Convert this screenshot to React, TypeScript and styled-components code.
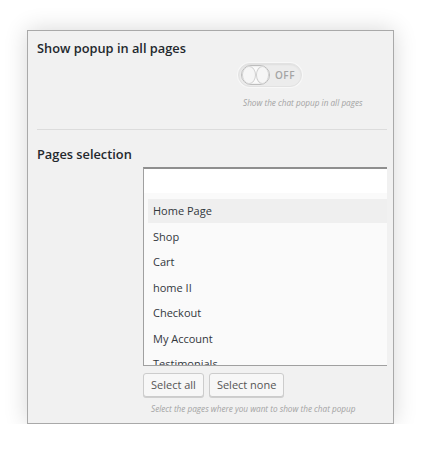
import React from "react";
import styled, { createGlobalStyle } from "styled-components";

const Global = createGlobalStyle`
  html, body { margin: 0; padding: 0; background: #ffffff; }
  body { font-family: "Open Sans", "Noto Sans", sans-serif; color: #23282d; }
  * { box-sizing: border-box; }
`;

const Page = styled.div`
  padding: 30px 0 0 27px;
`;

const Card = styled.div`
  width: 367px;
  height: 394px;
  background: #f1f1f1;
  border: 1px solid #a9a9a9;
  box-shadow: 0 0 22px rgba(0, 0, 0, 0.16);
  padding: 8px 6px 0 9px;
  overflow: hidden;
`;

const SectionTitle = styled.h3`
  margin: 0;
  font-size: 12.8px;
  line-height: 18px;
  font-weight: 600;
  color: #23282d;
`;

const ToggleField = styled.div`
  display: flex;
  flex-direction: column;
  align-items: flex-start;
  padding-left: 201px;
  margin-top: 6px;
`;

const Track = styled.div`
  width: 64px;
  height: 24px;
  border-radius: 12px;
  background: #ececec;
  border: 1px solid #e2e2e2;
  box-shadow: 0 0 0 1px #f8f8f8, inset 0 1px 2px rgba(0, 0, 0, 0.06);
  display: flex;
  align-items: center;
  padding-left: 2px;
  gap: 5px;
`;

const Knob = styled.div`
  width: 29px;
  height: 20px;
  border-radius: 10px;
  background: #fbfbfb;
  border: 1px solid #bdbdbd;
  box-shadow: inset 0 0 2px rgba(0, 0, 0, 0.15);
  display: flex;
  overflow: hidden;
`;

const KnobHalf = styled.span`
  flex: 1;
  height: 100%;
  border-radius: 50%;
  border: 1px solid #d0d0d0;
  background: #f6f6f6;
`;

const ToggleLabel = styled.span`
  font-size: 10px;
  font-weight: 600;
  letter-spacing: 0.5px;
  color: #a4a4a4;
`;

const Help = styled.p<{ $indent: number; $top: number }>`
  margin: ${(p) => p.$top}px 0 0 ${(p) => p.$indent}px;
  font-size: 8.2px;
  line-height: 12px;
  font-style: italic;
  color: #a3a3a3;
  white-space: nowrap;
`;

const Divider = styled.hr`
  margin: 20px 0 15px 0;
  border: 0;
  border-top: 1px solid #dcdcdc;
  height: 0;
`;

const SelectField = styled.div`
  display: flex;
  flex-direction: column;
  align-items: flex-start;
  padding-left: 106px;
  margin-top: 4px;
  overflow: hidden;
`;

const ListBox = styled.div`
  width: 270px;
  min-width: 270px;
  height: 199px;
  border: 1px solid #a0a0a0;
  border-top: 2px solid #8f8f8f;
  background: #fafafa;
  overflow: hidden;
`;

const Search = styled.div`
  height: 24px;
  background: #ffffff;
`;

const Options = styled.ul`
  list-style: none;
  margin: 0;
  padding: 6px 0 0 4px;
`;

const Option = styled.li<{ $active?: boolean }>`
  height: 24px;
  margin-bottom: 1.5px;
  padding-left: 5px;
  font-size: 11px;
  line-height: 24px;
  color: #32373c;
  background: ${(p) => (p.$active ? "#efefef" : "transparent")};
  white-space: nowrap;
`;

const Buttons = styled.div`
  display: flex;
  gap: 5px;
  margin-top: 7px;
`;

const Button = styled.button`
  height: 24px;
  padding: 0 7px;
  font-family: "Open Sans", "Noto Sans", sans-serif;
  font-size: 11px;
  line-height: 20px;
  color: #555;
  background: #f7f7f7;
  border: 1px solid #cccccc;
  border-radius: 3px;
  box-shadow: 0 1px 0 #cfcfcf;
  white-space: nowrap;
  cursor: pointer;
`;

const pages = ["Home Page", "Shop", "Cart", "home II", "Checkout", "My Account", "Testimonials"];

export default function App() {
  return (
    <Page>
      <Global />
      <Card>
        <SectionTitle>Show popup in all pages</SectionTitle>
        <ToggleField>
          <Track>
            <Knob>
              <KnobHalf />
              <KnobHalf />
            </Knob>
            <ToggleLabel>OFF</ToggleLabel>
          </Track>
          <Help $indent={5} $top={10}>Show the chat popup in all pages</Help>
        </ToggleField>
        <Divider />
        <SectionTitle>Pages selection</SectionTitle>
        <SelectField>
          <ListBox>
            <Search />
            <Options>
              {pages.map((p, i) => (
                <Option key={p} $active={i === 0}>
                  {p}
                </Option>
              ))}
            </Options>
          </ListBox>
          <Buttons>
            <Button>Select all</Button>
            <Button>Select none</Button>
          </Buttons>
          <Help $indent={8} $top={6}>Select the pages where you want to show the chat popup</Help>
        </SelectField>
      </Card>
    </Page>
  );
}
